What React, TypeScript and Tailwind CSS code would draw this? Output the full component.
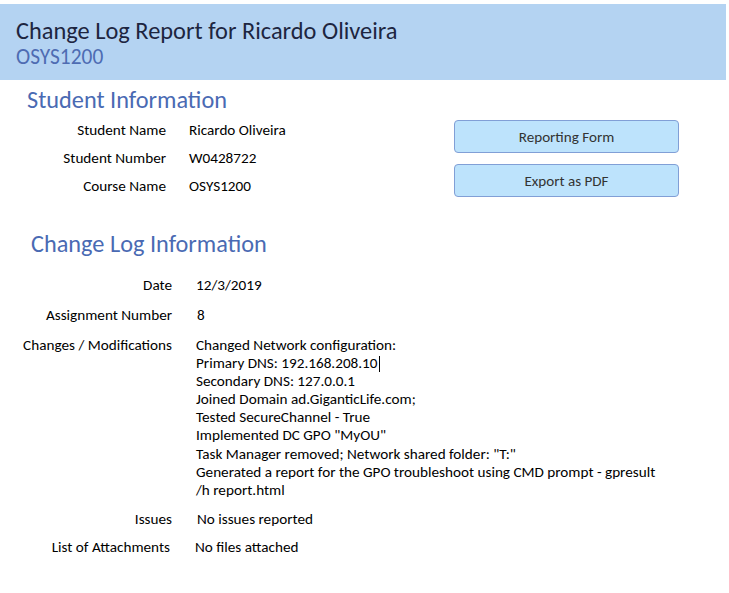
import React from "react";

const font = { fontFamily: "Carlito, 'Liberation Sans', sans-serif" };

function InfoRow({ label, value }: { label: string; value: string }) {
  return (
    <div className="flex h-[28px] items-start">
      <div className="w-[166px] text-right">{label}</div>
      <div className="pl-[23px]">{value}</div>
    </div>
  );
}

function LogRow({ label, children, h, pl = "pl-[24px]", w = "w-[172px]" }: { label: string; children: React.ReactNode; h: string; pl?: string; w?: string }) {
  return (
    <div className={`flex items-start ${h}`}>
      <div className={`${w} text-right`}>{label}</div>
      <div className={pl}>{children}</div>
    </div>
  );
}

export default function App() {
  const changes = [
    "Changed Network configuration:",
    "Primary DNS: 192.168.208.10",
    "Secondary DNS: 127.0.0.1",
    "Joined Domain ad.GiganticLife.com;",
    "Tested SecureChannel - True",
    'Implemented DC GPO "MyOU"',
    'Task Manager removed; Network shared folder: "T:"',
    "Generated a report for the GPO troubleshoot using CMD prompt - gpresult",
    "/h report.html",
  ];
  return (
    <div className="w-[729px] h-[593px] bg-white text-[#000000] text-[15.2px] leading-[18px]" style={font}>
      <div className="h-[4px]" />
      <div className="w-[726px] h-[76px] bg-[#b4d3f2] pl-[16px] pt-[13px]">
        <div className="text-[24.4px] leading-[28px] text-[#1d2540]">Change Log Report for Ricardo Oliveira</div>
        <div className="text-[21.4px] leading-[24px] text-[#4e6cb2]">OSYS1200</div>
      </div>
      <div className="pl-[27px] pt-[5px] text-[24.3px] leading-[30px] text-[#4a6ab3]">Student Information</div>
      <div className="flex pt-[5px]">
        <div className="w-[454px] pt-[1px]">
          <InfoRow label="Student Name" value="Ricardo Oliveira" />
          <InfoRow label="Student Number" value="W0428722" />
          <InfoRow label="Course Name" value="OSYS1200" />
        </div>
        <div className="flex flex-col gap-[11px]">
          <button className="w-[225px] h-[33px] rounded-[4px] border border-[#819fd6] bg-[#bde3fc] text-[#333333] text-[15.1px]">Reporting Form</button>
          <button className="w-[225px] h-[33px] rounded-[4px] border border-[#819fd6] bg-[#bde3fc] text-[#333333] text-[15.1px]">Export as PDF</button>
        </div>
      </div>
      <div className="pl-[31px] pt-[24px] text-[24.3px] leading-[30px] text-[#4a6ab3]">Change Log Information</div>
      <div className="pt-[17px]">
        <LogRow label="Date" h="h-[30px]">12/3/2019</LogRow>
        <LogRow label="Assignment Number" h="h-[30px]" pl="pl-[25px]">8</LogRow>
        <LogRow label="Changes / Modifications" h="h-[174px]">
          {changes.map((c, i) => (
            <div key={i} className="h-[18.1px]">
              {c}
              {i === 1 && <span className="inline-block w-px h-[16px] bg-black align-middle ml-[1px]" />}
            </div>
          ))}
        </LogRow>
        <LogRow label="Issues" h="h-[28px]" pl="pl-[25px]">No issues reported</LogRow>
        <LogRow label="List of Attachments" h="h-[28px]" w="w-[170px]" pl="pl-[25px]">No files attached</LogRow>
      </div>
    </div>
  );
}
